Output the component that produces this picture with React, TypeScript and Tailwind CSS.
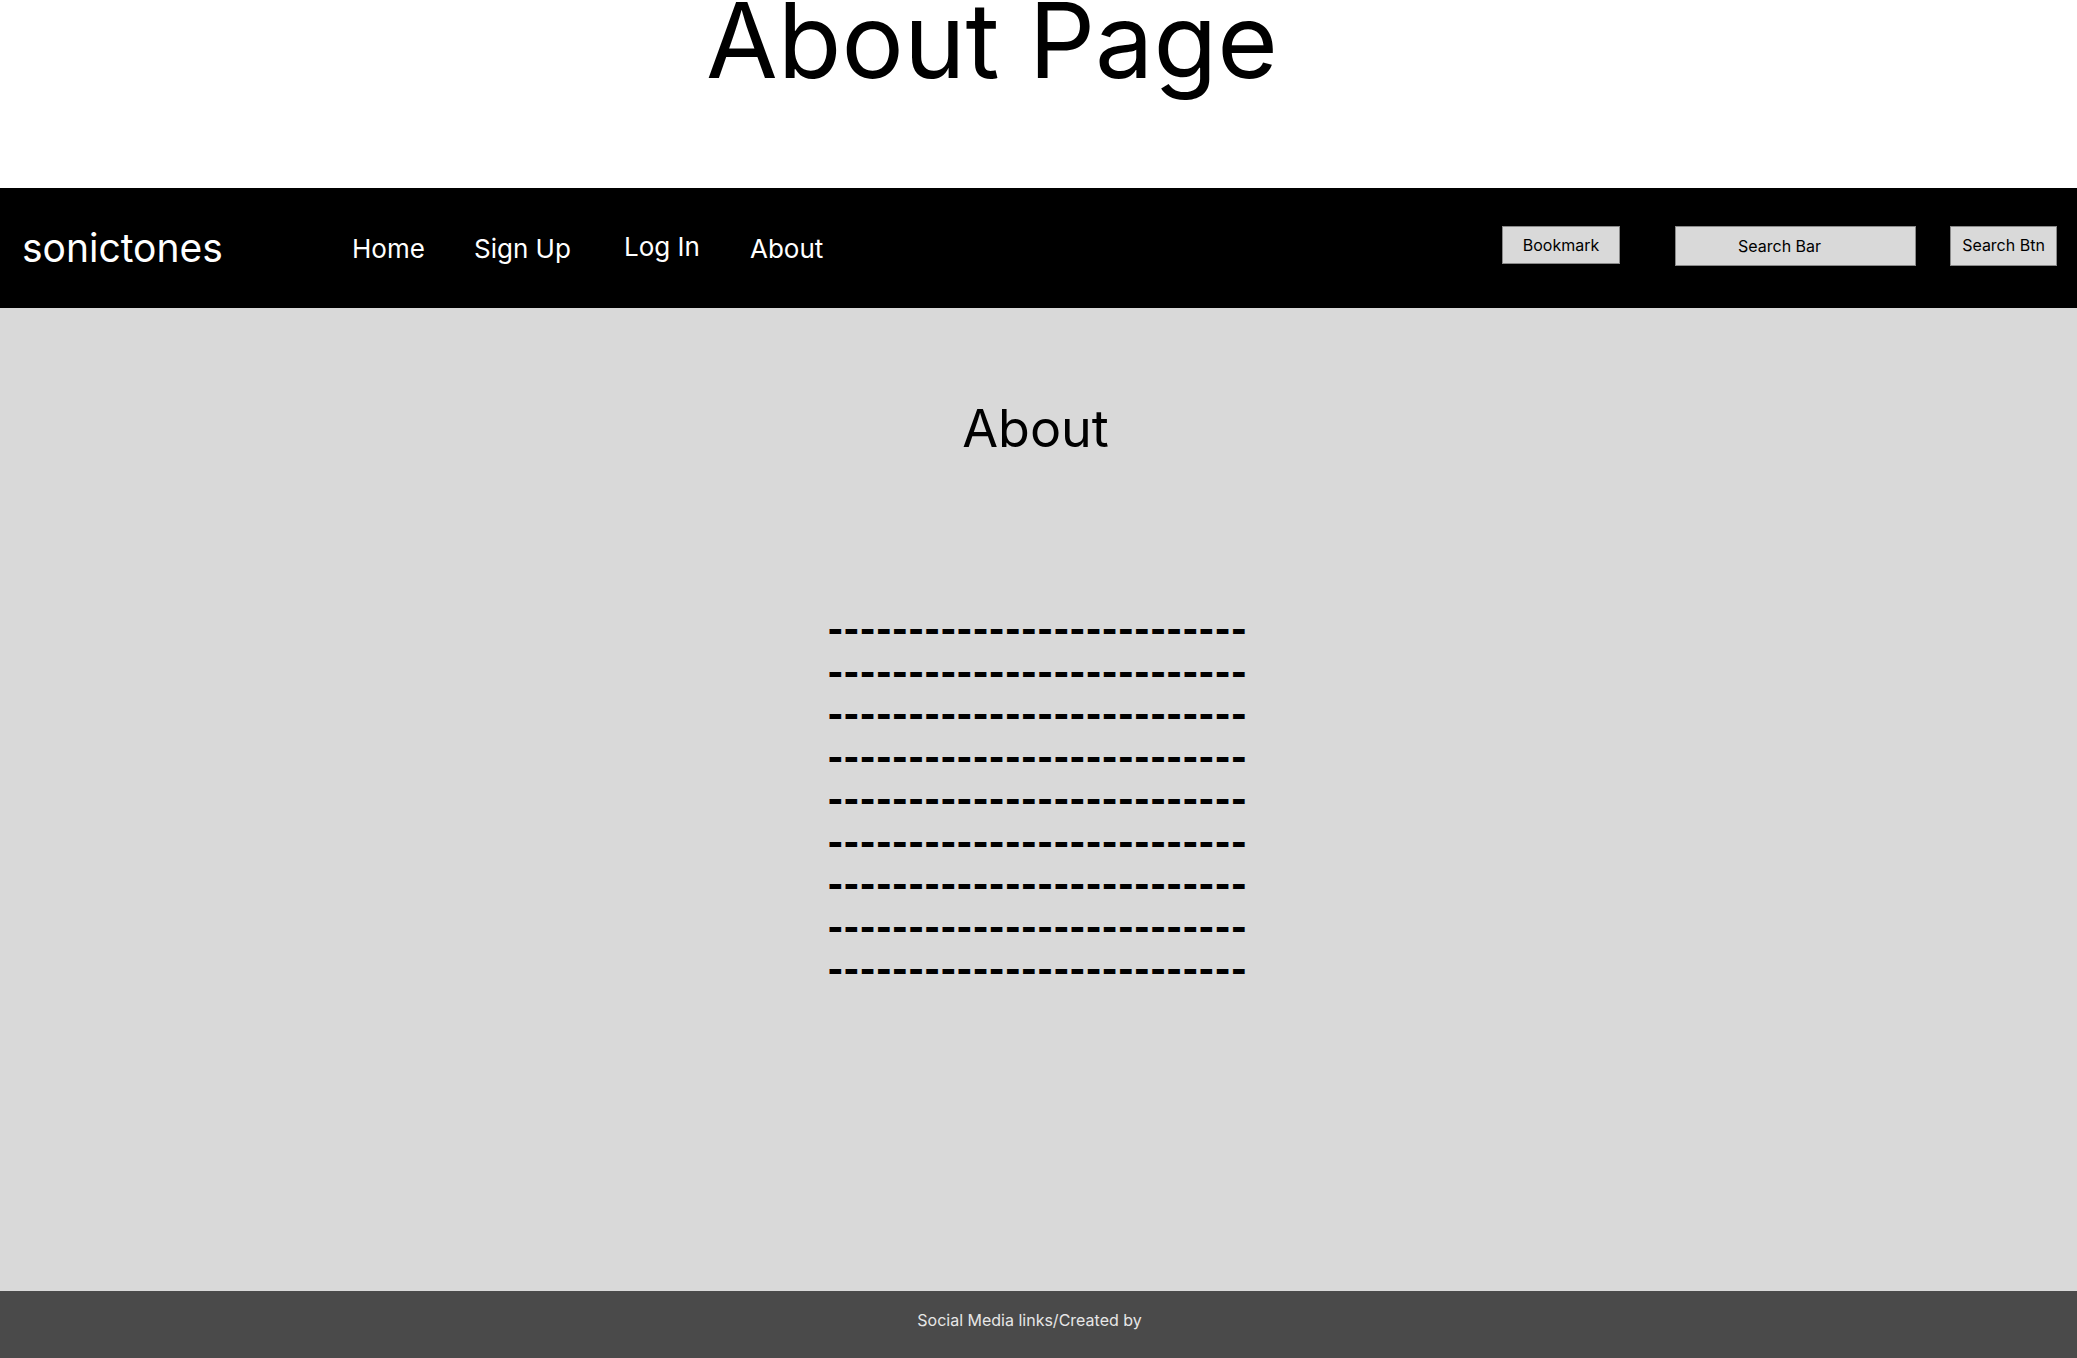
import React from 'react';

const navLinks = [
  { label: 'Home', width: 'w-[122px]', extra: '' },
  { label: 'Sign Up', width: 'w-[150px]', extra: '' },
  { label: 'Log In', width: 'w-[126px]', extra: '-translate-y-[2px]' },
  { label: 'About', width: 'w-[100px]', extra: '' },
];

const dashRow = '--------------------------';

const App = () => {
  return (
    <div className="min-h-[1358px] flex flex-col font-['Inter',sans-serif] text-black">
      {/* page title */}
      <header className="h-[188px] bg-white overflow-hidden">
        <h1 className="text-[104px] leading-none -mt-[12px] text-center pr-[93px] font-normal">
          About Page
        </h1>
      </header>

      {/* navbar */}
      <nav className="h-[120px] bg-black text-white flex items-center pl-[22px] pr-[20px]">
        <div className="w-[330px] text-[39px]">sonictones</div>
        {navLinks.map((link) => (
          <a key={link.label} className={`${link.width} text-[26px] ${link.extra}`}>
            {link.label}
          </a>
        ))}
        <div className="ml-auto self-start mt-[38px] flex items-start text-black text-[16px]">
          <button className="w-[118px] h-[38px] bg-[#d9d9d9] border border-[#8a8a8a] flex items-center justify-center">
            Bookmark
          </button>
          <div className="ml-[55px] w-[241px] h-[40px] bg-[#d9d9d9] border border-[#8a8a8a] flex items-center pl-[62px]">
            Search Bar
          </div>
          <button className="ml-[34px] w-[107px] h-[40px] bg-[#d9d9d9] border border-[#8a8a8a] flex items-center justify-center pb-[3px]">
            Search Btn
          </button>
        </div>
      </nav>

      {/* content */}
      <main className="flex-1 bg-[#d9d9d9] flex flex-col items-center">
        <h2 className="mt-[82px] text-[52px] leading-normal pr-[6px]">About</h2>
        <div className="mt-[140px] flex flex-col items-center text-[34px] font-black leading-[42.5px] pr-[3px]">
          {Array.from({ length: 9 }).map((_, i) => (
            <p key={i}>{dashRow}</p>
          ))}
        </div>
      </main>

      {/* footer */}
      <footer className="h-[67px] bg-[#4a4a4a] text-[#e6e6e6] text-[16px] flex justify-center pt-[17px] pr-[18px]">
        Social Media links/Created by
      </footer>
    </div>
  );
};

export default App;
